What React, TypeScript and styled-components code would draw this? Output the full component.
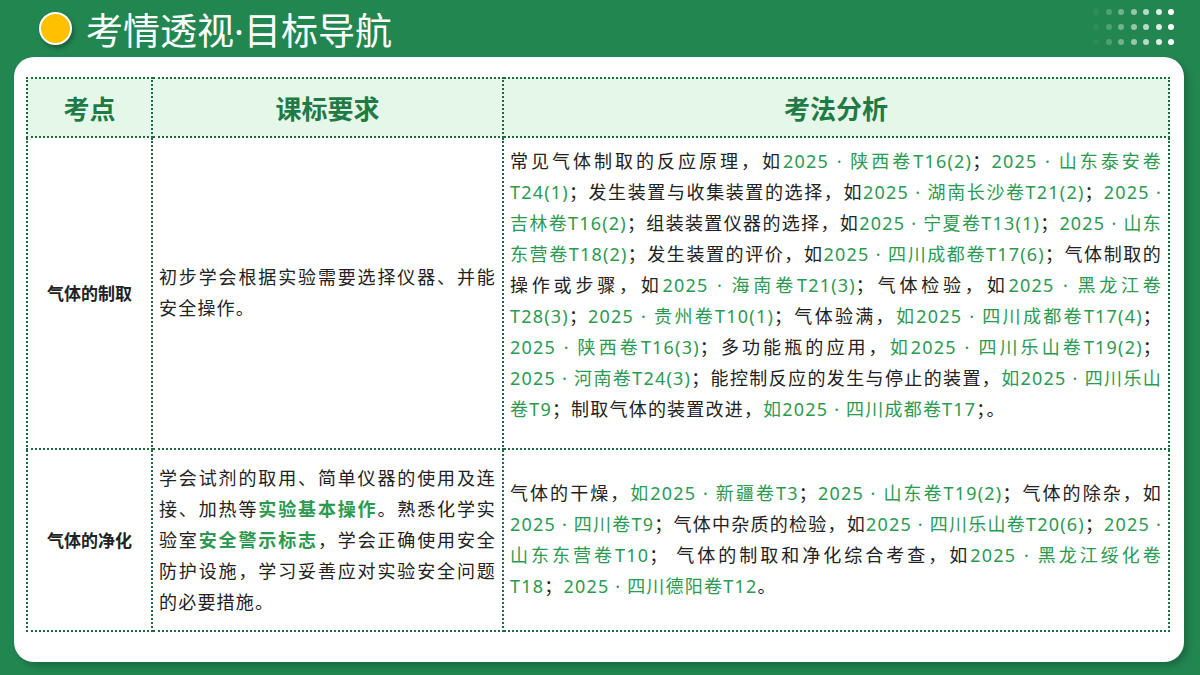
import React from 'react';
import styled, { createGlobalStyle } from 'styled-components';

const Global = createGlobalStyle`
  body { margin: 0; font-family: "Noto Sans", "Noto Sans CJK SC", sans-serif; }
`;

const Page = styled.div`
  width: 1200px;
  height: 675px;
  background: #228651;
  box-sizing: border-box;
  padding: 0 16px 13px 14px;
  display: flex;
  flex-direction: column;
  position: relative;
  overflow: hidden;
`;

const TitleBar = styled.div`
  height: 57px;
  display: flex;
  align-items: center;
  gap: 14px;
  padding-left: 25px;
`;

const Dot = styled.div`
  width: 29px;
  height: 29px;
  border-radius: 50%;
  background: #ffc000;
  border: 2px solid #fff;
  box-shadow: 2px 3px 4px rgba(0, 0, 0, 0.3);
`;

const Title = styled.h1`
  margin: 0;
  color: #fff;
  font-size: 37px;
  font-weight: 400;
  letter-spacing: 0;
`;

const DotGrid = styled.div`
  position: absolute;
  right: 26px;
  top: 9px;
  display: grid;
  grid-template-columns: repeat(7, 6px);
  column-gap: 6.5px;
  row-gap: 9px;
`;

const Pip = styled.span<{ $o: number }>`
  width: 6px;
  height: 6px;
  border-radius: 50%;
  background: rgba(255, 255, 255, ${(p) => p.$o});
`;

const Card = styled.div`
  flex: 1;
  background: #fff;
  border-radius: 20px;
  padding: 20px 14px 0 12px;
  box-shadow: 4px 4px 6px rgba(0, 0, 0, 0.2);
`;

const Table = styled.table`
  width: 100%;
  border-collapse: collapse;
  table-layout: fixed;
`;

const Th = styled.th`
  border: 2px dotted #1c6b3c;
  background: #e4f7e8;
  color: #1f7a45;
  font-size: 26px;
  font-weight: 700;
  height: 57px;
  padding: 0;
`;

const Td = styled.td<{ $head?: boolean }>`
  border: 2px dotted #1c6b3c;
  font-size: 18px;
  letter-spacing: 1.2px;
  line-height: 31px;
  color: #222;
  padding: 8px 6px;
  text-align: ${(p) => (p.$head ? 'center' : 'justify')};
  font-weight: ${(p) => (p.$head ? 700 : 400)};
  vertical-align: ${(p) => (p.$head ? 'middle' : 'top')};
  ${(p) => (p.$head ? 'letter-spacing: 0; font-size: 17px;' : '')}
`;

const Mid = styled(Td)`
  vertical-align: middle;
  padding: 8px 6px;
`;

const G = styled.span`
  color: #2b9a50;
`;

const B = styled.b`
  color: #2b9a50;
`;

export default function App() {
  const pips = [];
  for (let r = 0; r < 3; r++)
    for (let c = 0; c < 7; c++) pips.push(<Pip key={`${r}-${c}`} $o={0.05 + c * 0.16} />);
  return (
    <>
      <Global />
      <Page>
        <TitleBar>
          <Dot />
          <Title>考情透视·目标导航</Title>
        </TitleBar>
        <DotGrid>{pips}</DotGrid>
        <Card>
          <Table>
            <colgroup>
              <col style={{ width: 125 }} />
              <col style={{ width: 351 }} />
              <col />
            </colgroup>
            <thead>
              <tr>
                <Th>考点</Th>
                <Th>课标要求</Th>
                <Th>考法分析</Th>
              </tr>
            </thead>
            <tbody>
              <tr style={{ height: 312 }}>
                <Td $head>气体的制取</Td>
                <Mid>初步学会根据实验需要选择仪器、并能安全操作。</Mid>
                <Td>
                  常见气体制取的反应原理，如<G>2025 · 陕西卷T16(2)</G>；<G>2025 · 山东泰安卷T24(1)</G>；发生装置与收集装置的选择，如<G>2025 · 湖南长沙卷T21(2)</G>；<G>2025 · 吉林卷T16(2)</G>；组装装置仪器的选择，如<G>2025 · 宁夏卷T13(1)</G>；<G>2025 · 山东东营卷T18(2)</G>；发生装置的评价，如<G>2025 · 四川成都卷T17(6)</G>；气体制取的操作或步骤，如<G>2025 · 海南卷T21(3)</G>；气体检验，如<G>2025 · 黑龙江卷T28(3)</G>；<G>2025 · 贵州卷T10(1)</G>；气体验满，<G>如2025 · 四川成都卷T17(4)</G>；<G>2025 · 陕西卷T16(3)</G>；多功能瓶的应用，<G>如2025 · 四川乐山卷T19(2)</G>；<G>2025 · 河南卷T24(3)</G>；能控制反应的发生与停止的装置，<G>如2025 · 四川乐山卷T9</G>；制取气体的装置改进，<G>如2025 · 四川成都卷T17</G>；。
                </Td>
              </tr>
              <tr style={{ height: 182 }}>
                <Td $head>气体的净化</Td>
                <Mid>
                  学会试剂的取用、简单仪器的使用及连接、加热等<B>实验基本操作</B>。熟悉化学实验室<B>安全警示标志</B>，学会正确使用安全防护设施，学习妥善应对实验安全问题的必要措施。
                </Mid>
                <Td style={{ paddingTop: 28 }}>
                  气体的干燥，<G>如2025 · 新疆卷T3</G>；<G>2025 · 山东卷T19(2)</G>；气体的除杂，如<G>2025 · 四川卷T9</G>；气体中杂质的检验，如<G>2025 · 四川乐山卷T20(6)</G>；<G>2025 · 山东东营卷T10</G>； 气体的制取和净化综合考查，如<G>2025 · 黑龙江绥化卷T18</G>；<G>2025 · 四川德阳卷T12</G>。
                </Td>
              </tr>
            </tbody>
          </Table>
        </Card>
      </Page>
    </>
  );
}
